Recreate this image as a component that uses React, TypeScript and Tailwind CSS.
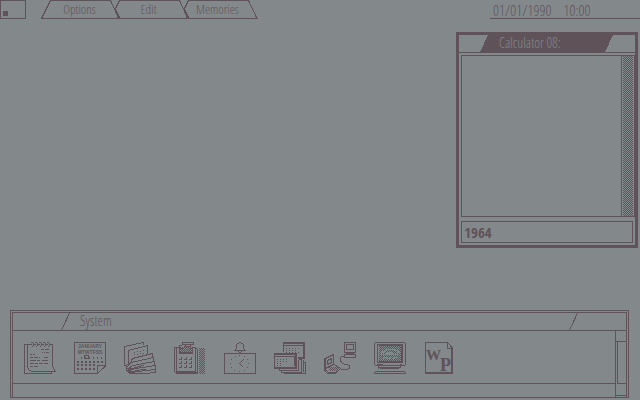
import type { ReactNode } from "react";

const ink = "#5f5359";

function Icon({ children }: { children: ReactNode }) {
  return (
    <svg width="36" height="36" viewBox="0 0 36 36" fill="none" stroke={ink} strokeWidth="1" shapeRendering="crispEdges" aria-hidden="true">
      {children}
    </svg>
  );
}

const range = (n: number) => Array.from({ length: n }, (_, i) => i);

/* Alternating pixels inside a box of whole pixels. */
function Checker({ x, y, w, h, color = ink }: { x: number; y: number; w: number; h: number; color?: string }) {
  let d = "";
  for (let r = 0; r < h; r++) for (let c = r % 2; c < w; c += 2) d += `M${x + c} ${y + r}h1v1h-1z`;
  return <path d={d} fill={color} stroke="none" />;
}

/* Pixel runs: each entry is x, y, length. */
function Runs({ of, color = ink }: { of: number[][]; color?: string }) {
  return <path d={of.map(([x, y, n]) => `M${x} ${y}h${n}v1h-${n}z`).join("")} fill={color} stroke="none" />;
}

function Notepad() {
  return (
    <Icon>
      <path d="M8 4.5H5.5V27.5L7.5 30.5L10 31.5H33.5L31.5 28.5L30.5 26V4.5H28M5 4.5H2.5V33.5H29.5V31" />
      {range(5).map((i) => (
        <Runs key={i} of={[[9 + i * 4, 2, 2], [11 + i * 4, 3, 1], [8 + i * 4, 4, 2], [11 + i * 4, 4, 1], [11 + i * 4, 5, 1], [10 + i * 4, 6, 1]]} />
      ))}
      <Runs
        of={[
          [19, 9, 3], [23, 9, 4], [20, 12, 1], [22, 12, 1], [24, 12, 3], [8, 14, 2], [11, 14, 2], [8, 17, 3], [12, 17, 4], [17, 17, 1], [22, 17, 4],
          [8, 20, 6], [15, 20, 3], [20, 20, 6], [8, 23, 4], [13, 23, 3], [17, 23, 4], [22, 23, 4], [8, 26, 3], [12, 26, 4],
        ]}
      />
    </Icon>
  );
}

function Calendar() {
  return (
    <Icon>
      <path d="M26 33.5H2.5V2.5H33.5V26L25.5 33.5V25.5H33" />
      <g fill={ink} stroke="none" fontFamily="Liberation Sans, sans-serif" fontWeight="bold" fontSize="5" textAnchor="middle">
        <text x="18" y="8">JANUARY</text>
        <text x="18" y="14">MTWTFSS</text>
      </g>
      {[17, 21, 24, 28].map((y, r) =>
        range(7).map((c) =>
          (r === 0 && c < 1) || (r > 1 && c > 4) ? null : (
            <Runs key={`${r}-${c}`} of={[[5 + c * 4, y, r === 0 ? 1 : 2], [5 + c * 4, y + 1, r === 0 ? 1 : 2]]} />
          ),
        ),
      )}
      <path d="M12.5 15.5h4v3h-4z" />
    </Icon>
  );
}

function Cards() {
  return (
    <Icon>
      <path d="M4 25.5H2.5V6.5L21.5 2.5V5M6.5 26V10.5L25.5 5.5V14M8 24L10.5 18.5L30.5 13.5V17M5 27L9 22.5L31.5 17.5V21M5 29L11 25.5L32.5 21.5V25M6 31L14 28.5L33.5 25.5V29M8 33L16 31.5L33.5 29.5V32.5L22 33.5H8L4.5 30V25M5 31L9 28M6 30L22 25M7 32L24 29M3 26L10 22" />
      <Runs of={[[12, 12, 1], [15, 11, 1], [18, 11, 1], [21, 10, 1], [12, 14, 1], [15, 14, 1], [18, 13, 1], [21, 13, 1]]} />
    </Icon>
  );
}

function DeskCalculator() {
  return (
    <Icon>
      <path d="M7 7.5H2.5V31.5L4.5 33.5H25.5V9.5L23.5 7.5H20M4.5 8V31.5H23.5V8M4 32.5H25" />
      <path d="M10.5 2.5h11v2h-11zM13.5 5v2M18.5 5v2M10 5.5H7.5V13.5H20.5V6.5" />
      <Checker x={8} y={7} w={12} h={6} />
      <Runs of={[[12, 6, 6], [8, 8, 3], [17, 8, 3], [8, 12, 12]]} />
      {range(9).map((i) => (
        <path key={i} d={`M${7 + (i % 3) * 5} ${19.5 + Math.floor(i / 3) * 4}h3M${9.5 + (i % 3) * 5} ${17 + Math.floor(i / 3) * 4}v3`} />
      ))}
      <Checker x={27} y={8} w={6} h={26} />
    </Icon>
  );
}

function AlarmClock() {
  return (
    <Icon>
      <Runs of={[[17, 2, 2], [15, 3, 2], [19, 3, 2], [14, 8, 1], [21, 8, 1], [13, 9, 1], [22, 9, 1], [12, 10, 12], [16, 11, 1], [19, 11, 1], [17, 12, 2]]} />
      <path d="M14.5 4v4M21.5 4v4M2.5 13.5H33.5V33.5H2.5Z" />
      {range(12).map((i) => {
        const a = (i * Math.PI) / 6;
        return <rect key={i} x={Math.round(17 + 9 * Math.sin(a))} y={Math.round(23 + 8 * Math.cos(a))} width="1" height="1" fill={ink} stroke="none" />;
      })}
      <path d="M21.5 19.5L17.5 23.5L21.5 27.5" />
    </Icon>
  );
}

function Windows() {
  return (
    <Icon>
      <path d="M11.5 12V2.5H32.5V18.5H26M12 3.5H32M31.5 3V18M12 5.5H32M26 17.5H32" />
      {range(4).map((r) => (
        <path key={r} d={`M14 ${8.5 + r * 2}h${r % 2 ? 12 : 15}`} strokeDasharray="1 2" />
      ))}
      <path d="M2.5 13.5H24.5V28.5H2.5ZM3 14.5H24M3 16.5H24M3 27.5H24M22.5 17V26M23.5 15V28" />
      {range(4).map((r) => (
        <path key={r} d={`M5 ${19.5 + r * 2}h${r > 1 ? 6 : 10}`} strokeDasharray="1 2" />
      ))}
      <path d="M7.5 29V30.5H26.5V20M9.5 31V32.5H15M12 33.5H33.5V22.5H31M15 32.5H29.5V19.5H27M31.5 20V32" />
    </Icon>
  );
}

function Terminals() {
  return (
    <Icon>
      <path d="M22.5 2.5H33.5V12.5H22.5ZM24.5 4.5H31.5V9.5H24.5ZM22.5 14.5H33.5V17.5H22.5ZM24 13.5H32" />
      <path d="M22 16.5H19.5L18.5 18V21L20.5 23.5L27.5 25.5V28.5L25 29.5H19" />
      <path d="M3.5 18.5L11.5 14.5V24.5L3.5 28.5ZM5.5 20.5L9.5 18.5V22.5L5.5 24.5ZM2.5 18V30L5.5 33.5H13L18.5 28.5L12 24.5M3 29.5L6.5 32.5H13" />
      <Checker x={7} y={27} w={10} h={4} />
    </Icon>
  );
}

function Monitor() {
  return (
    <Icon>
      <path d="M3 2.5H33M33.5 3V25M33 25.5H3M2.5 25V3M5.5 4.5H30.5V22.5H5.5ZM6.5 5.5H29.5V21.5H6.5M6 28.5V26M6.5 27.5H28.5V26M8 28.5H27M3 31.5H33M2 33.5H34M2.5 32v2M33.5 32v2M5 24.5H11M28 24.5h2" />
      <Checker x={7} y={6} w={22} h={15} />
      <Runs of={[[14, 9, 10], [12, 10, 3], [23, 10, 3], [10, 11, 3], [25, 11, 2], [9, 12, 3], [15, 12, 6], [25, 12, 3], [13, 13, 9], [9, 14, 18], [12, 17, 3], [17, 17, 3], [22, 17, 3], [10, 18, 3], [15, 18, 3], [20, 18, 3]]} color="#83898b" />
    </Icon>
  );
}

function WordProcessor() {
  return (
    <Icon>
      <path d="M3.5 2.5H25.5L30.5 8V33.5H3.5ZM25.5 3V8.5H30M29.5 9V33M4 32.5H30" />
      <g fill={ink} stroke="none" fontFamily="Liberation Serif, serif" fontWeight="bold">
        <text x="4" y="20" fontSize="15">W</text>
        <text x="18" y="31" fontSize="18">P</text>
      </g>
    </Icon>
  );
}

const apps = [
  { name: "Notepad", Art: Notepad },
  { name: "Calendar", Art: Calendar },
  { name: "Card file", Art: Cards },
  { name: "Calculator", Art: DeskCalculator },
  { name: "Clock", Art: AlarmClock },
  { name: "Windows", Art: Windows },
  { name: "Terminal", Art: Terminals },
  { name: "Monitor", Art: Monitor },
  { name: "Word processor", Art: WordProcessor },
];

function Tab({ label, first }: { label: string; first: boolean }) {
  return (
    <button className="relative h-5 w-[69px] pr-1 pb-0.5 pl-3 text-center text-[13px] leading-none">
      <svg className="absolute top-0 left-0 overflow-visible" width="78" height="19" fill="none" stroke={ink} shapeRendering="crispEdges" aria-hidden="true">
        <path d={first ? "M.5 18.5L9.5.5H69.5L78 18.5Z" : "M4.5 10.5L9.5.5H69.5L78 18.5H.5"} />
        {!first && <path d="M4 9h2l5 10h-3z" fill={ink} stroke="none" />}
      </svg>
      {label}
    </button>
  );
}

export default function App() {
  return (
    <div className="relative flex min-h-screen flex-col overflow-hidden bg-[#83898b] font-['Open_Sans_Condensed_Light','Roboto_Condensed','Liberation_Sans',sans-serif] text-sm text-[#5f5359]">
      <header className="flex h-5 items-start">
        <button aria-label="Desk" className="flex h-[19px] w-[26px] items-end border border-[#5f5359] p-0.5">
          <span className="size-[5px] bg-[#5f5359]" />
        </button>
        <nav className="ml-[15px] flex">
          {["Options", "Edit", "Memories"].map((label, i) => (
            <Tab key={label} label={label} first={i === 0} />
          ))}
        </nav>
        <div className="ml-auto flex h-[19px] w-[150px] gap-3 border-b border-[#5f5359] pl-[3px] text-[15px] leading-5">
          <span>01/01/1990</span>
          <span>10:00</span>
        </div>
      </header>

      <section className="absolute top-8 right-0.5 flex h-[216px] w-[182px] flex-col border-[3px] border-[#5f5359]">
        <div className="relative h-[18px] border-b border-[#5f5359]">
          <svg className="absolute inset-0" width="176" height="17" shapeRendering="crispEdges" aria-hidden="true">
            <path d="M29 0H154L146 17H21Z" fill={ink} />
          </svg>
          <h2 className="relative pl-10 leading-4 text-[#83898b]">Calculator 08:</h2>
        </div>
        <div className="mt-0.5 ml-0.5 flex h-[162px] border border-r-0 border-[#5f5359]">
          <div className="flex-1" />
          <div className="w-[14px] border-x border-[#5f5359] px-px">
            <svg width="10" height="160" shapeRendering="crispEdges" aria-hidden="true">
              <Checker x={0} y={0} w={10} h={160} />
            </svg>
          </div>
        </div>
        <input aria-label="Calculator entry" defaultValue="1964" className="mt-1 mr-0.5 ml-0.5 h-[22px] border border-[#5f5359] bg-transparent px-0.5 font-['Open_Sans_Condensed','Roboto_Condensed','Liberation_Sans',sans-serif] text-[15px] font-bold outline-none" />
      </section>

      <section className="mt-auto mr-[11px] mb-0.5 ml-2.5 border border-[#5f5359] p-px pb-0">
        <div className="flex h-[85px] flex-col border border-b-0 border-[#5f5359]">
          <div className="flex h-[18px] justify-between border-b border-[#5f5359] pr-12 pl-12">
            <div className="flex gap-2.5">
              <svg width="9" height="18" stroke={ink} shapeRendering="crispEdges" aria-hidden="true">
                <path d="M8.5 0L.5 17.5" />
              </svg>
              <h2 className="leading-4">System</h2>
            </div>
            <svg width="9" height="18" stroke={ink} shapeRendering="crispEdges" aria-hidden="true">
              <path d="M8.5 0L.5 17.5" />
            </svg>
          </div>
          <div className="flex flex-1">
            <div className="flex flex-1 flex-col">
              <div className="flex h-[53px] gap-3.5 border-b border-[#5f5359] pt-[9px] pl-[9px]">
                {apps.map(({ name, Art }) => (
                  <button key={name} aria-label={name} className="size-9">
                    <Art />
                  </button>
                ))}
              </div>
            </div>
            <div className="flex w-[11px] flex-col border-l border-[#5f5359]">
              <div className="h-[11px] border-b border-[#5f5359]" />
              <div className="ml-px h-[42px] border-b border-l border-[#5f5359]" />
              <div className="h-3 border-b border-[#5f5359]" />
            </div>
          </div>
        </div>
      </section>
    </div>
  );
}
